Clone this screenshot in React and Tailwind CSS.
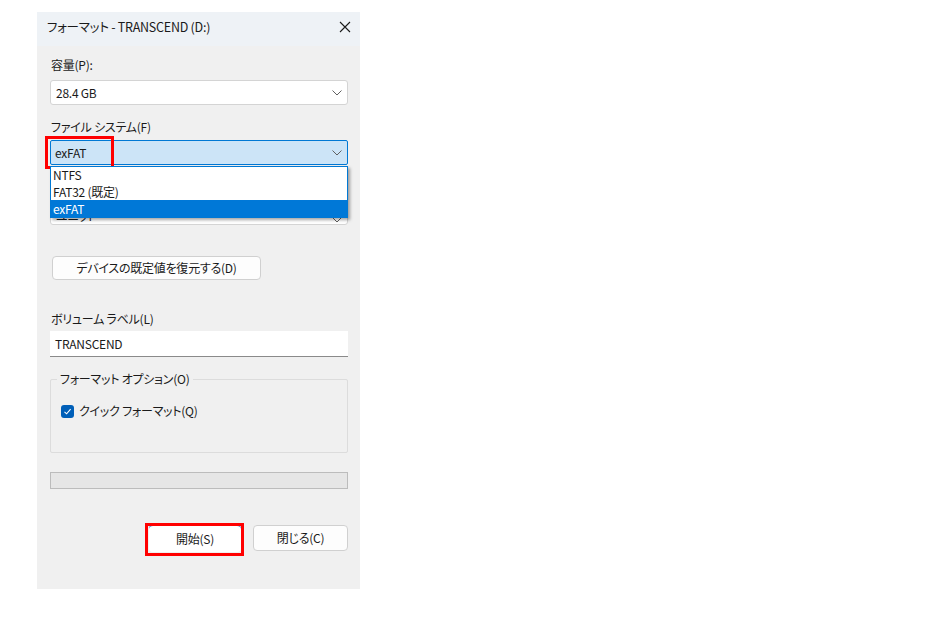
import React from "react";

const jp = { fontFamily: '"Noto Sans CJK JP", "Noto Sans", sans-serif' };

function Chevron() {
  return (
    <svg width="10" height="6" viewBox="0 0 10 6" className="shrink-0">
      <path d="M0.5 0.5 L5 5 L9.5 0.5" fill="none" stroke="#606060" strokeWidth="1" />
    </svg>
  );
}

export default function App() {
  return (
    <div className="w-[925px] h-[637px] bg-white relative [font-feature-settings:'palt']" style={jp}>
      <div className="absolute left-[37px] top-[12px] w-[323px] h-[577px] bg-[#f0f0f0] flex flex-col text-[#1a1a1a]">
        {/* Title bar */}
        <div className="h-[34px] bg-[#eef2f6] flex items-center pl-[10px] pr-[9px] pb-[4px] justify-between">
          <span className="text-[12.5px] tracking-[-0.02em]">フォーマット - TRANSCEND (D:)</span>
          <svg width="12" height="12" viewBox="0 0 12 12">
            <path d="M1 1 L11 11 M11 1 L1 11" stroke="#1a1a1a" strokeWidth="1.1" />
          </svg>
        </div>
        {/* Body */}
        <div className="flex flex-col pl-[13px] pr-[12px] text-[12px] tracking-[-0.02em]">
          <div className="mt-[11px] h-[16px] leading-[16px] pl-[1px]">容量(P):</div>
          <div className="mt-[7px] h-[25px] bg-white border border-[#d4d4d4] rounded-[3px] flex items-center justify-between pl-[5px] pr-[5px]">
            <span>28.4 GB</span>
            <Chevron />
          </div>
          <div className="mt-[14px] h-[16px] leading-[16px] pl-[1px]">ファイル システム(F)</div>
          <div className="relative mt-[5px]">
            <div className="h-[25px] bg-[#cce4f7] border border-[#0078d4] rounded-[2px] flex items-center justify-between pl-[4px] pr-[5px]">
              <span>exFAT</span>
              <Chevron />
            </div>
            {/* red highlight */}
            <div className="absolute left-[-5px] top-[-4px] w-[69px] h-[33px] border-[3px] border-[#ff0000]" />
            {/* dropdown list */}
            <div className="absolute left-0 top-[26px] w-[298px] bg-white border border-[#0078d4] shadow-[2px_2px_3px_rgba(0,0,0,0.35)] z-10 flex flex-col">
              <div className="h-[17px] leading-[16px] pl-[2px]">NTFS</div>
              <div className="h-[16px] leading-[16px] pl-[2px]">FAT32 (既定)</div>
              <div className="h-[17px] leading-[17px] pl-[2px] bg-[#0078d7] text-white">exFAT</div>
            </div>
          </div>
          <div className="mt-[13px] h-[16px]" />
          <div className="mt-[5px] h-[26px] bg-white border border-[#d4d4d4] rounded-[3px] flex items-end justify-between pl-[5px] pr-[5px] pb-[1px] overflow-hidden">
            <span className="leading-[14px]">ユニット</span>
            <Chevron />
          </div>
          <div className="mt-[31px] ml-[2px] w-[209px] h-[24px] bg-[#fdfdfd] border border-[#d0d0d0] rounded-[4px] flex items-center justify-center">
            デバイスの既定値を復元する(D)
          </div>
          <div className="mt-[31px] h-[16px] leading-[16px] pl-[1px]">ボリューム ラベル(L)</div>
          <div className="mt-[4px] h-[26px] bg-white border-b border-[#8a8a8a] flex items-center pl-[5px]">
            TRANSCEND
          </div>
          <div className="relative mt-[22px] h-[74px] border border-[#dcdcdc] rounded-[2px]">
            <div className="absolute left-[6px] top-[-9px] px-[3px] bg-[#f0f0f0] h-[16px] leading-[16px]">
              フォーマット オプション(O)
            </div>
            <div className="mt-[22px] ml-[10px] flex items-center gap-[5px]">
              <div className="w-[13px] h-[13px] rounded-[3px] bg-[#005fb8] flex items-center justify-center">
                <svg width="9" height="9" viewBox="0 0 9 9">
                  <path d="M1.5 4.8 L3.6 6.8 L7.6 2.2" fill="none" stroke="white" strokeWidth="1.1" />
                </svg>
              </div>
              <span>クイック フォーマット(Q)</span>
            </div>
          </div>
          <div className="mt-[19px] h-[17px] bg-[#e6e6e6] border border-[#bcbcbc]" />
          <div className="mt-[36px] flex justify-end gap-[12px]">
            <div className="relative w-[92px] h-[27px] bg-white border-t border-[#0067c0] rounded-[4px] flex items-center justify-center">
              開始(S)
              <div className="absolute left-[-4px] top-[-3px] w-[99px] h-[33px] border-[3px] border-[#ff0000]" />
            </div>
            <div className="w-[95px] h-[26px] bg-[#fdfdfd] border border-[#d0d0d0] rounded-[4px] flex items-center justify-center">
              閉じる(C)
            </div>
          </div>
        </div>
      </div>
    </div>
  );
}
